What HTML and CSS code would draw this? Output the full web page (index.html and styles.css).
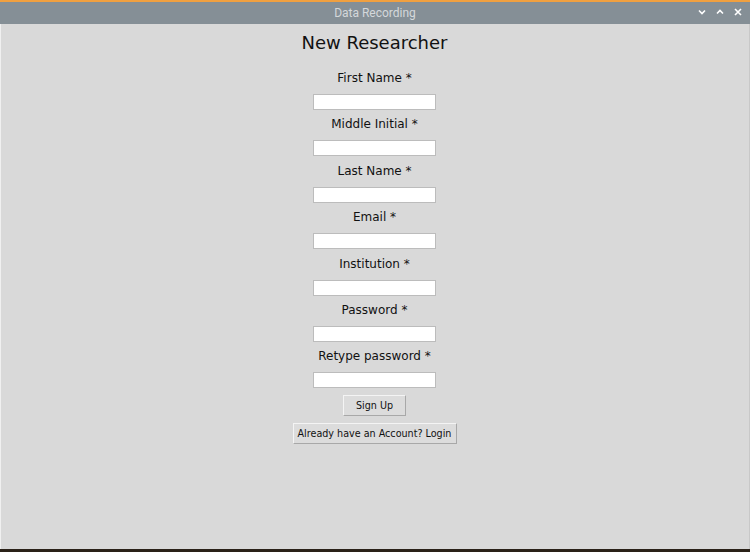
FILE: index.html
```html
<!DOCTYPE html>
<html>
<head>
<meta charset="utf-8">
<link rel="stylesheet" href="styles.css">
</head>
<body>
<div class="window">
  <div class="titlebar">
    <span class="title">Data Recording</span>
    <div class="controls">
      <svg width="8" height="6" viewBox="0 0 8 6"><path d="M1 1.5 L4 4.5 L7 1.5" fill="none" stroke="#fff" stroke-width="1.6"/></svg>
      <svg width="8" height="6" viewBox="0 0 8 6"><path d="M1 4.5 L4 1.5 L7 4.5" fill="none" stroke="#fff" stroke-width="1.6"/></svg>
      <svg width="8" height="8" viewBox="0 0 8 8"><path d="M1 1 L7 7 M7 1 L1 7" fill="none" stroke="#fff" stroke-width="1.6"/></svg>
    </div>
  </div>
  <div class="content">
    <h1 class="heading">New Researcher</h1>
    <div class="field"><label class="label">First Name *</label><input class="entry" type="text"></div>
    <div class="field"><label class="label">Middle Initial *</label><input class="entry" type="text"></div>
    <div class="field"><label class="label">Last Name *</label><input class="entry" type="text"></div>
    <div class="field"><label class="label">Email *</label><input class="entry" type="text"></div>
    <div class="field"><label class="label">Institution *</label><input class="entry" type="text"></div>
    <div class="field"><label class="label">Password *</label><input class="entry" type="password"></div>
    <div class="field"><label class="label">Retype password *</label><input class="entry" type="password"></div>
    <button class="btn btn-signup">Sign Up</button>
    <button class="btn btn-login">Already have an Account? Login</button>
  </div>
  <div class="bottom"></div>
</div>
</body>
</html>
```

FILE: styles.css
```css
* { box-sizing: border-box; }
html, body { margin: 0; padding: 0; }
body {
  width: 750px;
  height: 552px;
  overflow: hidden;
  background: #2a2118;
  font-family: "DejaVu Sans", sans-serif;
}
.window {
  width: 750px;
  height: 552px;
  display: flex;
  flex-direction: column;
}
.titlebar {
  height: 24px;
  background: #858f96;
  border-top: 2px solid #f0a040;
  position: relative;
  display: flex;
  align-items: center;
  justify-content: center;
}
.title {
  font-family: Roboto, "Liberation Sans", sans-serif;
  font-size: 12px;
  color: #d4d8db;
}
.controls {
  position: absolute;
  right: 8px;
  top: 6px;
  display: flex;
  align-items: center;
  gap: 10px;
}
.content {
  flex: 1;
  background: #d9d9d9;
  border-left: 1px solid #f0f0f0;
  border-right: 1px solid #c8c8c8;
  display: flex;
  flex-direction: column;
  align-items: center;
  padding-top: 8px;
  padding-right: 1px;
}
.heading {
  margin: 0;
  font-weight: normal;
  font-size: 18px;
  line-height: 22px;
  color: #111;
}
.field {
  display: flex;
  flex-direction: column;
  align-items: center;
}
.heading + .field { margin-top: 16px; }
.field + .field { margin-top: 6.4px; }
.label {
  font-size: 12px;
  line-height: 17px;
  color: #111;
  height: 17px;
  margin-bottom: 7px;
}
.entry {
  width: 123px;
  height: 16px;
  border: 1px solid #bcbcbc;
  background: #fff;
  margin: 0;
  padding: 0;
  outline: none;
}
.btn {
  font-family: "DejaVu Sans", sans-serif;
  font-size: 9.6px;
  color: #111;
  background: #dcdcdc;
  border: 1px solid;
  border-color: #f4f4f4 #a8a8a8 #a8a8a8 #f4f4f4;
  padding: 0;
  margin: 0;
  white-space: nowrap;
}
.btn-signup {
  margin-top: 7px;
  width: 63px;
  height: 21px;
}
.btn-login {
  margin-top: 7px;
  width: 164px;
  height: 21px;
}
.bottom {
  height: 3px;
  background: #2a2118;
}
```
